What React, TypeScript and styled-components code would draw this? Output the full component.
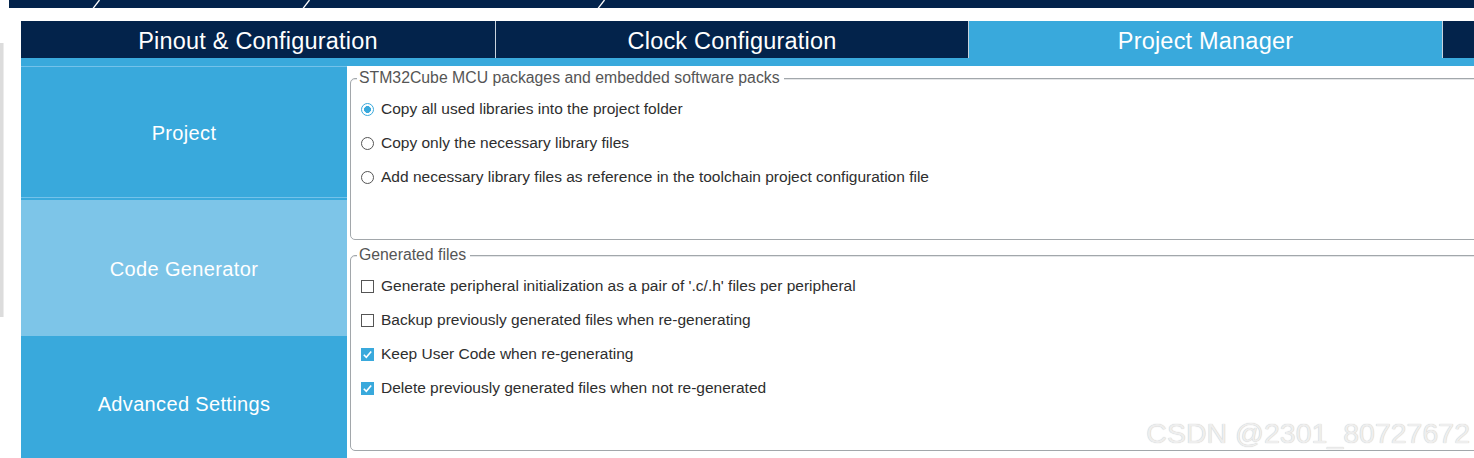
import React from "react";
import styled, { createGlobalStyle } from "styled-components";

const NAVY = "#03234b";
const BLUE = "#39a9dc";
const LIGHT = "#7dc5e8";
const LINE = "#74c2ea";
const FONT = `"Liberation Sans", Arial, sans-serif`;

const Global = createGlobalStyle`
  html, body { margin: 0; padding: 0; background: #ffffff; }
  body { font-family: ${FONT}; }
`;

const Page = styled.div`
  position: relative;
  width: 1474px;
  height: 458px;
  overflow: hidden;
  background: #ffffff;
  display: flex;
  flex-direction: column;
`;

const TopStrip = styled.div`
  margin-left: 9px;
  height: 8px;
  background: ${NAVY};
  display: flex;
  flex: none;
`;

const Crumb = styled.div<{ $w?: number }>`
  height: 8px;
  ${(p) => (p.$w ? `width: ${p.$w}px; flex: none;` : `flex: 1;`)}
`;

const SlashSvg = styled.svg`
  width: 8px;
  height: 8px;
  flex: none;
  display: block;
`;

const Slash = () => (
  <SlashSvg viewBox="0 0 8 8">
    <line x1="1" y1="8.5" x2="7.5" y2="0" stroke="#ffffff" strokeWidth="1.3" />
  </SlashSvg>
);

const Body = styled.div`
  margin-top: 13px;
  display: flex;
  flex: 1;
  min-height: 0;
`;

const Gutter = styled.div`
  width: 21px;
  flex: none;
  display: flex;
  flex-direction: column;
`;

const ScrollTrack = styled.div`
  margin-top: 22px;
  width: 3px;
  height: 274px;
  background: #dcdcdc;
  border-right: 1px solid #ececec;
`;

const Main = styled.div`
  flex: 1;
  display: flex;
  flex-direction: column;
  min-width: 0;
`;

const TabBar = styled.div`
  display: flex;
  height: 37px;
  background: ${NAVY};
  flex: none;
`;

const Tab = styled.div<{ $w?: number; $active?: boolean; $sep?: boolean }>`
  ${(p) => (p.$w ? `width: ${p.$w}px; flex: none;` : `flex: 1;`)}
  box-sizing: border-box;
  height: 37px;
  display: flex;
  align-items: center;
  justify-content: center;
  background: ${(p) => (p.$active ? BLUE : NAVY)};
  border-right: ${(p) => (p.$sep ? "1px solid #c9d3dd" : "none")};
  color: #ffffff;
  font-family: ${FONT};
  font-size: 23.5px;
  letter-spacing: 0.2px;
  padding-top: 4px;
`;

const BlueStrip = styled.div`
  height: 8px;
  background: ${BLUE};
  flex: none;
`;

const Content = styled.div`
  display: flex;
  flex: 1;
  min-height: 0;
`;

const Sidebar = styled.div`
  width: 326px;
  flex: none;
  background: ${BLUE};
  display: flex;
  flex-direction: column;
`;

const SideItem = styled.div<{ $h: number; $selected?: boolean; $lined?: boolean; $gap?: number; $pt?: number }>`
  box-sizing: border-box;
  height: ${(p) => p.$h}px;
  flex: none;
  display: flex;
  align-items: center;
  justify-content: center;
  padding-top: ${(p) => p.$pt ?? 0}px;
  background: ${(p) => (p.$selected ? LIGHT : BLUE)};
  border-top: ${(p) => (p.$lined ? `1px solid ${LINE}` : "none")};
  border-bottom: ${(p) => (p.$lined ? `1px solid ${LINE}` : "none")};
  margin-bottom: ${(p) => p.$gap ?? 0}px;
  color: #ffffff;
  font-family: ${FONT};
  font-size: 20px;
  letter-spacing: 0.35px;
`;

const Panel = styled.div`
  flex: 1;
  min-width: 0;
  padding-left: 3px;
  overflow: hidden;
  display: flex;
  flex-direction: column;
`;

const Group = styled.fieldset<{ $h: number; $mt: number }>`
  box-sizing: border-box;
  height: ${(p) => p.$h}px;
  margin: ${(p) => p.$mt}px -30px 0 0;
  padding: 5px 0 0 6px;
  border: 1px solid #a2a7ab;
  border-radius: 5px;
  box-shadow: inset 0 1px 0 #e4e6e8;
  min-width: 0;
  display: flex;
  flex-direction: column;
`;

const Legend = styled.legend`
  padding: 0 4px 0 2px;
  margin: 0;
  font-family: ${FONT};
  font-size: 15.8px;
  line-height: 18px;
  color: #555555;
  background: #ffffff;
`;

const Row = styled.label`
  height: 34px;
  display: flex;
  align-items: center;
  gap: 7px;
  padding-left: 4px;
  box-sizing: border-box;
  font-family: ${FONT};
  font-size: 15.5px;
  color: #2e2e2e;
`;

const RadioDot = styled.span<{ $on?: boolean }>`
  box-sizing: border-box;
  width: 13px;
  height: 13px;
  border-radius: 50%;
  border: 1px solid ${(p) => (p.$on ? BLUE : "#555555")};
  background: ${(p) => (p.$on ? `radial-gradient(circle, ${BLUE} 0 3.2px, #ffffff 3.7px)` : "#ffffff")};
  flex: none;
`;

const Box = styled.span<{ $on?: boolean }>`
  box-sizing: border-box;
  width: 13px;
  height: 13px;
  border: 1px solid ${(p) => (p.$on ? BLUE : "#555555")};
  background: ${(p) => (p.$on ? BLUE : "#ffffff")};
  flex: none;
  display: flex;
  align-items: center;
  justify-content: center;
`;

const CheckSvg = styled.svg`
  width: 11px;
  height: 11px;
  display: block;
`;

const Check = () => (
  <CheckSvg viewBox="0 0 11 11">
    <polyline points="1.8,5.8 4.3,8.3 9.2,2.4" fill="none" stroke="#ffffff" strokeWidth="1.6" />
  </CheckSvg>
);

const Watermark = styled.div`
  position: absolute;
  right: 4px;
  bottom: 8px;
  font-family: ${FONT};
  font-size: 28.5px;
  color: #eeeeee;
  text-shadow: 0 0 1px rgba(0, 0, 0, 0.28);
  pointer-events: none;
`;

const radios = [
  { text: "Copy all used libraries into the project folder", on: true },
  { text: "Copy only the necessary library files", on: false },
  { text: "Add necessary library files as reference in the toolchain project configuration file", on: false },
];

const checks = [
  { text: "Generate peripheral initialization as a pair of '.c/.h' files per peripheral", on: false },
  { text: "Backup previously generated files when re-generating", on: false },
  { text: "Keep User Code when re-generating", on: true },
  { text: "Delete previously generated files when not re-generated", on: true },
];

export default function App() {
  return (
    <>
      <Global />
      <Page>
        <TopStrip>
          <Crumb $w={83} />
          <Slash />
          <Crumb $w={202} />
          <Slash />
          <Crumb $w={287} />
          <Slash />
          <Crumb />
        </TopStrip>
        <Body>
          <Gutter>
            <ScrollTrack />
          </Gutter>
          <Main>
            <TabBar>
              <Tab $w={475} $sep>Pinout &amp; Configuration</Tab>
              <Tab $w={473} $sep>Clock Configuration</Tab>
              <Tab $w={474} $sep $active>Project Manager</Tab>
              <Tab />
            </TabBar>
            <BlueStrip />
            <Content>
              <Sidebar>
                <SideItem $h={132} $lined $gap={2} $pt={3}>Project</SideItem>
                <SideItem $h={136} $selected $pt={2}>Code Generator</SideItem>
                <SideItem $h={136}>Advanced Settings</SideItem>
              </Sidebar>
              <Panel>
                <Group $h={171} $mt={3}>
                  <Legend>STM32Cube MCU packages and embedded software packs</Legend>
                  {radios.map((r) => (
                    <Row key={r.text}>
                      <RadioDot $on={r.on} />
                      {r.text}
                    </Row>
                  ))}
                </Group>
                <Group $h={205} $mt={6}>
                  <Legend>Generated files</Legend>
                  {checks.map((c) => (
                    <Row key={c.text}>
                      <Box $on={c.on}>{c.on && <Check />}</Box>
                      {c.text}
                    </Row>
                  ))}
                </Group>
              </Panel>
            </Content>
          </Main>
        </Body>
        <Watermark>CSDN @2301_80727672</Watermark>
      </Page>
    </>
  );
}
